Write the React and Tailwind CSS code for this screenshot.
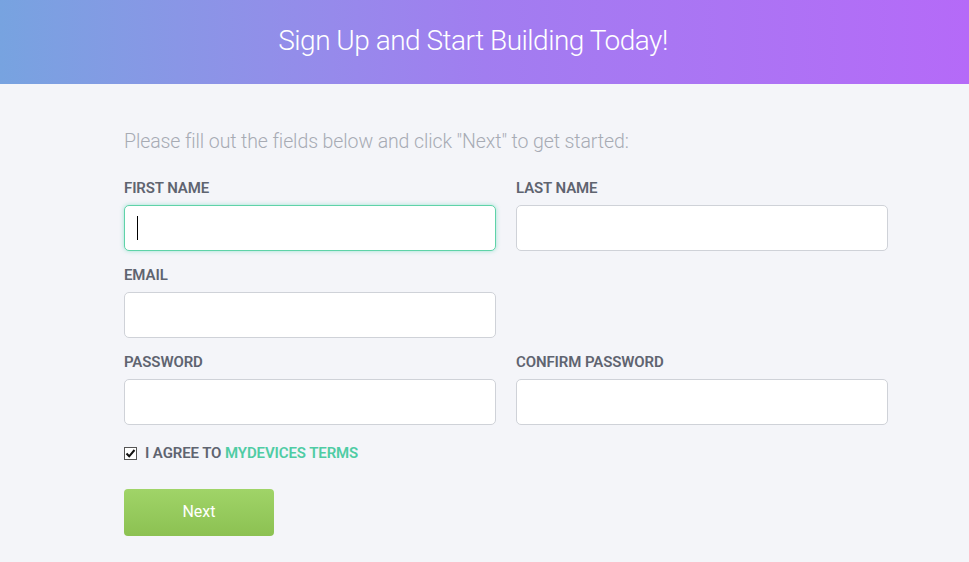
import { useState } from "react";

const Field = ({ label, focused }) => (
  <div className="flex flex-col">
    <label className="text-[15px] font-semibold text-[#5f6470] leading-none mb-[9px] tracking-[-0.1px]">
      {label}
    </label>
    <div
      className={
        "h-[46px] bg-white rounded-[5px] border flex items-center px-[12px] " +
        (focused
          ? "border-[#5fd3a8] shadow-[0_0_4px_rgba(72,207,173,0.5)]"
          : "border-[#cfd2d8]")
      }
    >
      {focused && <span className="w-[1px] h-[24px] bg-black" />}
    </div>
  </div>
);

const App = () => {
  const [agree, setAgree] = useState(true);
  return (
    <div
      className="min-h-[562px] bg-[#f4f5f9]"
      style={{ fontFamily: "Roboto, 'Liberation Sans', sans-serif" }}
    >
      {/* header */}
      <div className="h-[84px] flex items-center justify-center pr-[23px] bg-gradient-to-r from-[#77a3e0] via-[#a17df0] to-[#b56af8]">
        <h1 className="text-white text-[28px] font-light tracking-[-0.5px] pb-[2px]">
          Sign Up and Start Building Today!
        </h1>
      </div>

      <div className="pl-[124px] w-[888px] pt-[48px]">
        <p className="text-[19.5px] font-light text-[#a7abb4] leading-none tracking-[-0.1px]">
          Please fill out the fields below and click "Next" to get started:
        </p>

        <div className="grid grid-cols-2 gap-x-[20px] gap-y-[17px] mt-[29px]">
          <Field label="FIRST NAME" focused />
          <Field label="LAST NAME" />
          <Field label="EMAIL" />
          <div />
          <Field label="PASSWORD" />
          <Field label="CONFIRM PASSWORD" />
        </div>

        <div className="flex items-center mt-[21px] gap-[8px]">
          <button
            onClick={() => setAgree(!agree)}
            className="w-[13px] h-[13px] border border-[#555] bg-white flex items-center justify-center"
          >
            {agree && (
              <svg width="11" height="11" viewBox="0 0 11 11">
                <path d="M1.5 5.5 L4.2 8.3 L9.5 2" stroke="#111" strokeWidth="2" fill="none" />
              </svg>
            )}
          </button>
          <span className="text-[15px] font-semibold text-[#5f6470] leading-none tracking-[-0.1px]">
            I AGREE TO <span className="text-[#4fcca4]">MYDEVICES TERMS</span>
          </span>
        </div>

        <button className="mt-[28px] w-[150px] h-[47px] rounded-[4px] bg-gradient-to-b from-[#a0d468] to-[#8cc152] text-white text-[16px]">
          Next
        </button>
      </div>
    </div>
  );
};

export default App;
